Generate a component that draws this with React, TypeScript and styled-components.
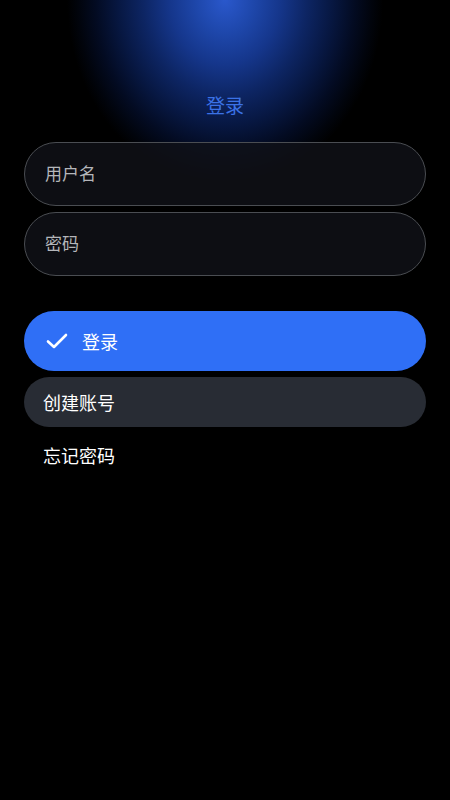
import styled, { createGlobalStyle } from "styled-components";

const FONT = `"Noto Sans CJK SC", "Noto Sans", sans-serif`;
const BLUE = "#2f6ff6";

const GlobalStyle = createGlobalStyle`
  html, body {
    margin: 0;
    padding: 0;
    background: #000;
  }
  body {
    font-family: ${FONT};
  }
  #root {
    min-height: 800px;
  }
`;

function Check() {
  return (
    <svg width="22" height="16" viewBox="0 0 22 16" fill="none">
      <path
        d="M2 8.5 L8 14 L20 2"
        stroke="#fff"
        strokeWidth="2.6"
        strokeLinecap="round"
        strokeLinejoin="round"
      />
    </svg>
  );
}

export default function App() {
  return (
    <>
      <GlobalStyle />
      <Page>
        <Header>
          <Title>登录</Title>
        </Header>
        <Form>
          <Fields>
            <Field placeholder="用户名" />
            <Field placeholder="密码" type="password" />
          </Fields>
          <Actions>
            <Button $variant="primary" type="button">
              <Check />
              登录
            </Button>
            <Button $variant="secondary" type="button">
              创建账号
            </Button>
            <Button $variant="text" type="button">
              忘记密码
            </Button>
          </Actions>
        </Form>
      </Page>
    </>
  );
}

const Page = styled.div`
  width: 450px;
  min-height: 800px;
  background:
    radial-gradient(
      ellipse 158px 185px at 225px 0px,
      #2a58cc 0%,
      #1e47ab 18%,
      #15368b 35%,
      #0d2563 52%,
      #071741 68%,
      #030b22 82%,
      #01040c 93%,
      rgba(0, 0, 0, 0) 100%
    ),
    #000;
  display: flex;
  flex-direction: column;
`;

const Header = styled.div`
  height: 142px;
  display: flex;
  justify-content: center;
  padding-top: 91px;
  box-sizing: border-box;
`;

const Title = styled.h1`
  margin: 0;
  font-family: ${FONT};
  font-size: 19px;
  font-weight: 400;
  line-height: 27px;
  color: #3b72e6;
`;

const Form = styled.div`
  display: flex;
  flex-direction: column;
  padding: 0 24px;
  gap: 35px;
`;

const Fields = styled.div`
  display: flex;
  flex-direction: column;
  gap: 6px;
`;

const Field = styled.input`
  height: 64px;
  box-sizing: border-box;
  border: 1.5px solid #4a4d52;
  border-radius: 32px;
  background: rgba(16, 18, 24, 0.8);
  padding: 0 20px 3px;
  font-family: ${FONT};
  font-size: 17px;
  color: #e6e6e6;
  outline: none;

  &::placeholder {
    color: #b4b6ba;
  }
`;

const Actions = styled.div`
  display: flex;
  flex-direction: column;
  gap: 6px;
`;

const Button = styled.button<{ $variant: "primary" | "secondary" | "text" }>`
  display: flex;
  align-items: center;
  gap: 14px;
  border: none;
  border-radius: 30px;
  font-family: ${FONT};
  font-size: 18px;
  color: #fff;
  cursor: pointer;
  height: ${(p) => (p.$variant === "primary" ? "60px" : p.$variant === "secondary" ? "50px" : "40px")};
  padding: ${(p) => (p.$variant === "primary" ? "0 22px" : "0 19px")};
  background: ${(p) =>
    p.$variant === "primary" ? BLUE : p.$variant === "secondary" ? "#282c34" : "transparent"};
  margin-top: ${(p) => (p.$variant === "text" ? "2px" : "0")};
`;
